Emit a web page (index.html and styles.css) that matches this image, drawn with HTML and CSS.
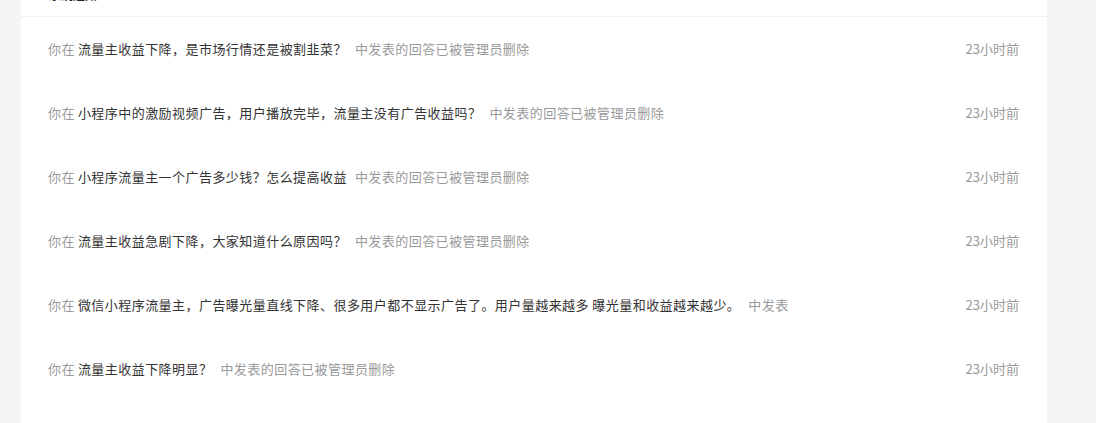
FILE: index.html
```html
<!DOCTYPE html>
<html lang="zh-CN">
<head>
<meta charset="utf-8">
<title>消息</title>
<link rel="stylesheet" href="styles.css">
</head>
<body>
<div class="page">
  <section class="card">
    <header class="card-head"><h2 class="card-title">系统通知</h2></header>
    <ul class="list">
      <li class="item">
        <div class="msg"><span class="muted">你在</span><span class="title">流量主收益下降，是市场行情还是被割韭菜？</span><span class="muted note">中发表的回答已被管理员删除</span></div>
        <span class="time">23小时前</span>
      </li>
      <li class="item">
        <div class="msg"><span class="muted">你在</span><span class="title">小程序中的激励视频广告，用户播放完毕，流量主没有广告收益吗？</span><span class="muted note">中发表的回答已被管理员删除</span></div>
        <span class="time">23小时前</span>
      </li>
      <li class="item">
        <div class="msg"><span class="muted">你在</span><span class="title">小程序流量主一个广告多少钱？怎么提高收益</span><span class="muted note">中发表的回答已被管理员删除</span></div>
        <span class="time">23小时前</span>
      </li>
      <li class="item">
        <div class="msg"><span class="muted">你在</span><span class="title">流量主收益急剧下降，大家知道什么原因吗？</span><span class="muted note">中发表的回答已被管理员删除</span></div>
        <span class="time">23小时前</span>
      </li>
      <li class="item">
        <div class="msg"><span class="muted">你在</span><span class="title">微信小程序流量主，广告曝光量直线下降、很多用户都不显示广告了。用户量越来越多 曝光量和收益越来越少。</span><span class="muted note">中发表</span></div>
        <span class="time">23小时前</span>
      </li>
      <li class="item">
        <div class="msg"><span class="muted">你在</span><span class="title">流量主收益下降明显？</span><span class="muted note">中发表的回答已被管理员删除</span></div>
        <span class="time">23小时前</span>
      </li>
    </ul>
  </section>
</div>
</body>
</html>
```

FILE: styles.css
```css
* { box-sizing: border-box; }
html, body {
  margin: 0;
  padding: 0;
  background: #f5f5f5;
  font-family: "Noto Sans CJK SC", "Noto Sans", "Liberation Sans", sans-serif;
}
.page {
  padding-left: 21px;
  height: 423px;
  overflow: hidden;
}
.card {
  width: 1026px;
  height: 480px;
  background: #fff;
  margin-top: -26px;
}
.card-head {
  height: 43px;
  border-bottom: 1px solid #f0f0f0;
  padding: 0 28px;
  display: flex;
  align-items: center;
}
.card-title {
  margin: 0;
  font-size: 12px;
  font-weight: 700;
  color: #222;
  line-height: 1;
}
.list {
  list-style: none;
  margin: 0;
  padding: 0;
}
.item {
  height: 64px;
  padding: 0 28px 0 27px;
  display: flex;
  align-items: center;
  justify-content: space-between;
  font-size: 13px;
  line-height: 20px;
}
.msg {
  display: flex;
  align-items: center;
  white-space: nowrap;
  letter-spacing: 0.45px;
}
.muted { color: #999; }
.title {
  color: #333;
  margin-left: 3px;
}
.note { margin-left: 8px; }
.time { color: #999; }
```
